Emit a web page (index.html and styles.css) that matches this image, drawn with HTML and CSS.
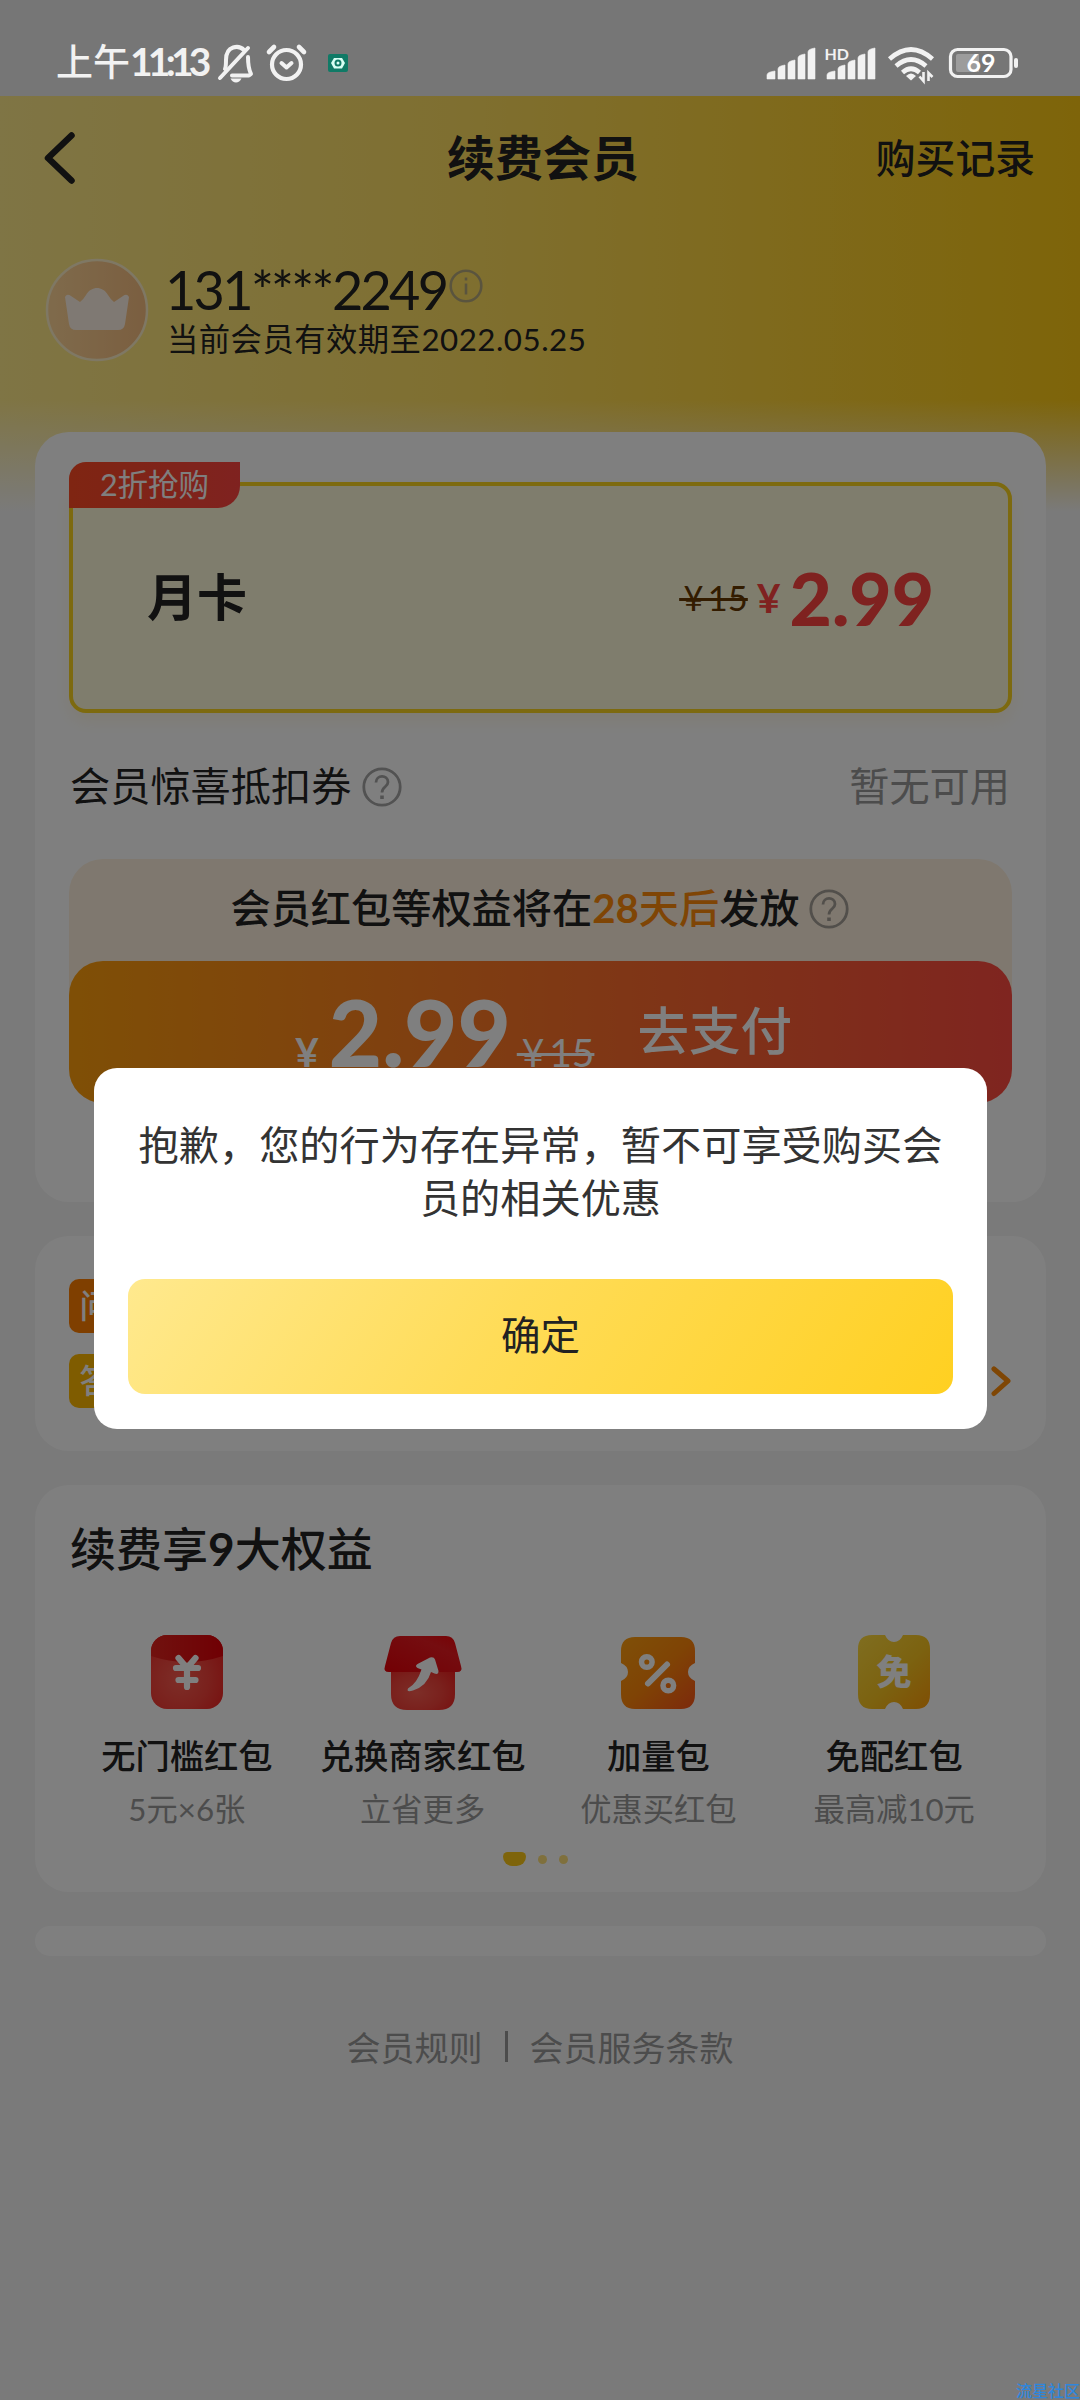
FILE: index.html
```html
<!DOCTYPE html>
<html lang="zh-CN">
<head>
<meta charset="utf-8">
<title>续费会员</title>
<link rel="stylesheet" href="styles.css">
</head>
<body>
<div class="phone">
  <div class="page">
    <div class="hero">
      <header class="nav">
        <svg class="back" viewBox="0 0 36 56" width="36" height="56"><path d="M29.5 5.5 6 28l23.500 22.500" fill="none" stroke="#222" stroke-width="6.500" stroke-linecap="round" stroke-linejoin="round"/></svg>
        <h1 class="nav-title">续费会员</h1>
        <span class="nav-link">购买记录</span>
      </header>
      <section class="user">
        <svg class="avatar" viewBox="0 0 104 104" width="104" height="104">
          <defs><linearGradient id="av" x1="0" x2="1"><stop offset="0" stop-color="#ffd698"/><stop offset="1" stop-color="#f6bd80"/></linearGradient></defs>
          <circle cx="52" cy="52" r="50" fill="url(#av)" stroke="#fff0c8" stroke-width="2.500"/>
          <path d="M20 39q2-4 6-1l9 6q3-2 6-7c3-5 7-7 11-7s8 2 11 7q3 5 6 7l9-6q4-3 6 1l-4 27q-1 6-7 6H31q-6 0-7-6z" fill="#fff3e6"/>
        </svg>
        <div class="user-text">
          <div class="phone-row"><span class="phone-no">131<span class="stars">****</span>2249</span>
            <svg class="info" viewBox="0 0 34 34" width="34" height="34" fill="none" stroke="#b5a97c" stroke-width="2.600"><circle cx="17" cy="17" r="15.300"/><path d="M17 14.500v11M17 8.500v3"/></svg>
          </div>
          <div class="expiry">当前会员有效期至2022.05.25</div>
        </div>
      </section>
    </div>

    <main class="cards">
      <section class="card card-plan">
        <div class="plan">
          <span class="tag">2折抢购</span>
          <span class="plan-name">月卡</span>
          <span class="plan-price"><span class="was">&thinsp;¥&thinsp;15</span><span class="yen">¥</span><span class="now">2.99</span></span>
        </div>
        <div class="coupon">
          <span class="coupon-name">会员惊喜抵扣券</span>
          <svg class="help" viewBox="0 0 40 40" width="40" height="40" fill="none" stroke="#a4a4a4" stroke-width="2.800"><circle cx="20" cy="20" r="18.200"/><path d="M14 15.500c0-8 12-8 12-.5 0 5-6 4.500-6 10.500"/><path d="M20 28.500v3.500" stroke-width="3.600"/></svg>
          <span class="coupon-none">暂无可用</span>
        </div>
        <div class="pay-wrap">
          <div class="notice">
            <span>会员红包等权益将在<em class="days"><b>28</b>天后</em>发放</span>
            <svg class="help" viewBox="0 0 40 40" width="40" height="40" fill="none" stroke="#a49e96" stroke-width="2.800"><circle cx="20" cy="20" r="18.200"/><path d="M14 15.500c0-8 12-8 12-.5 0 5-6 4.500-6 10.500"/><path d="M20 28.500v3.500" stroke-width="3.600"/></svg>
          </div>
          <div class="pay">
            <span class="pay-yen">¥</span><span class="pay-now">2.99</span><span class="pay-was">&thinsp;¥&thinsp;15</span><span class="pay-go">去支付</span>
          </div>
        </div>
      </section>

      <section class="card card-faq">
        <div class="faq-row"><span class="badge badge-q">问</span></div>
        <div class="faq-row"><span class="badge badge-a">答</span>
          <svg class="more" viewBox="0 0 22 32" width="22" height="32"><path d="M4 4 18 16 4 28.500" fill="none" stroke="#ff8c08" stroke-width="5" stroke-linecap="round" stroke-linejoin="round"/></svg>
        </div>
      </section>

      <section class="card card-perks">
        <h2 class="perks-title">续费享<b>9</b>大权益</h2>
        <div class="perks">
          <div class="perk">
            <svg class="perk-icon" viewBox="0 0 80 80" width="80" height="80">
              <defs>
                <linearGradient id="r1" x1="0" x2="1"><stop offset="0" stop-color="#e2241e"/><stop offset="1" stop-color="#e00008"/></linearGradient>
                <radialGradient id="r2" cx=".4" cy=".6" r=".8"><stop offset="0" stop-color="#fb5c50"/><stop offset=".5" stop-color="#f4423a"/><stop offset="1" stop-color="#ee1a1a"/></radialGradient>
                <clipPath id="c1"><rect x="4" y="3" width="72" height="74" rx="16"/></clipPath>
              </defs>
              <g clip-path="url(#c1)"><path d="M4 3h72v74H4z" fill="url(#r2)"/><path d="M4 3h72v21Q40 36 4 24z" fill="url(#r1)"/></g>
              <path d="M31.500 26 40 36l8.500-10M29 36h22M31.500 48h17M40 36v19" fill="none" stroke="#fff" stroke-width="6.200" stroke-linecap="round" stroke-linejoin="round"/>
            </svg>
            <div class="perk-name">无门槛红包</div><div class="perk-sub">5元×6张</div>
          </div>
          <div class="perk">
            <svg class="perk-icon" viewBox="0 0 80 80" width="80" height="80">
              <defs><linearGradient id="r3" x1="0" y1="1" x2="1" y2="0"><stop offset="0" stop-color="#e60008"/><stop offset=".7" stop-color="#ea1a20"/><stop offset="1" stop-color="#f2040a"/></linearGradient></defs>
              <path d="M8 34h64v28q0 16-16 16H24Q8 78 8 62z" fill="url(#r2)"/>
              <path d="M17 4h46q7 0 9 7l6 23q2 6-4 6H6q-6 0-4-6l6-23q2-7 9-7z" fill="url(#r3)"/>
              <path d="M25 56.500q9-5 13.500-19l-4-1.500q-3-2 0-4L47 25.500q4-1 5 2L55.500 39q0 4-4 2.500l-3.500-1.500Q44 54 30 58.500q-7 2-5-2z" fill="#fff"/>
            </svg>
            <div class="perk-name">兑换商家红包</div><div class="perk-sub">立省更多</div>
          </div>
          <div class="perk">
            <svg class="perk-icon" viewBox="0 0 80 80" width="80" height="80">
              <defs><linearGradient id="o1" x1="0" y1="0" x2="1" y2="1"><stop offset="0" stop-color="#ffa010"/><stop offset=".5" stop-color="#ff870a"/><stop offset="1" stop-color="#fa5418"/></linearGradient></defs>
              <path d="M17 5h46q14 0 14 14v12q-7 3-7 9t7 9v13q0 15-14 15H17Q3 77 3 62V49q7-3 7-9t-7-9V19Q3 5 17 5z" fill="url(#o1)"/>
              <g fill="none" stroke="#fff" stroke-width="5.500"><circle cx="28.800" cy="30" r="5.300"/><circle cx="50.300" cy="53.500" r="5.300"/><path d="M49 32.500 30 51.500" stroke-linecap="round" stroke-width="6"/></g>
            </svg>
            <div class="perk-name">加量包</div><div class="perk-sub">优惠买红包</div>
          </div>
          <div class="perk">
            <svg class="perk-icon" viewBox="0 0 80 80" width="80" height="80">
              <defs><linearGradient id="y1" x1="0" y1="0" x2="1" y2="1"><stop offset="0" stop-color="#ffdc40"/><stop offset=".55" stop-color="#f8c420"/><stop offset="1" stop-color="#ff9d08"/></linearGradient></defs>
              <path d="M18 3h13q3 7 9 7t9-7h13q14 0 14 14v45q0 15-14 15H49q-3-7-9-7t-9 7H18Q4 77 4 62V17Q4 3 18 3z" fill="url(#y1)"/>
              <text class="icon-char" x="40" y="52.500" text-anchor="middle">免</text>
            </svg>
            <div class="perk-name">免配红包</div><div class="perk-sub">最高减10元</div>
          </div>
        </div>
        <div class="dots"><i class="dot dot-on"></i><i class="dot"></i><i class="dot"></i></div>
      </section>

      <section class="card card-empty"></section>
    </main>

    <footer class="terms"><span>会员规则</span><i class="bar"></i><span>会员服务条款</span></footer>
  </div>

  <div class="mask">
    <div class="dialog" role="dialog">
      <p class="dialog-text">抱歉，您的行为存在异常，暂不可享受购买会员的相关优惠</p>
      <button class="dialog-btn">确定</button>
    </div>
  </div>

  <div class="status">
    <span class="time">上午<span class="digits">11:13</span></span>
    <svg class="status-left" viewBox="214 40 140 48" width="140" height="48">
      <g fill="none" stroke="#f2f2f2" stroke-width="4" stroke-linecap="round" stroke-linejoin="round">
        <path d="M225 69q1-2 1-9c0-15 13-15 18-10M248 57q0 11 3 17l-2 1.500h-17"/><path d="M220 78 248 48"/>
        <circle cx="286.500" cy="64.500" r="14.500" stroke-width="4.200"/><path d="M281.500 63l5 4.500 5-4.500"/><path d="M269 52l5-5M304 52l-5-5" stroke-width="4.600"/>
      </g>
      <path d="M230.500 78.500h11q-2 4-5.500 4t-5.500-4z" fill="#f2f2f2"/>
      <rect x="328" y="54" width="20" height="18" rx="2" fill="#107a66"/>
      <path d="M334 58h8l3 5-3 5.500h-8l-3-5.500z" fill="#d8fff4"/><circle cx="338" cy="63" r="2.500" fill="#d8fff4" stroke="#107a66" stroke-width="2"/>
    </svg>
    <svg class="status-right" viewBox="760 40 264 48" width="264" height="48" fill="#f2f2f2">
      <g id="bars"><path d="M767 79v-4q0-3 8-4v8zM778 79V69q0-3 7-4v14zM788 79V64q0-3 7-4v19zM798 79V58q0-3 7-4v25zM808 79V52q0-3 7-4v31z" stroke="#f2f2f2" stroke-width=".6" stroke-linejoin="round"/></g>
      <use href="#bars" x="60"/>
      <text class="hd" x="824.500" y="59.500">HD</text>
      <g fill="none" stroke="#f2f2f2" stroke-width="4.600"><path d="M889.500 59q21.500-19 43 0M896 66q15-13 30 0M902.500 72.500q8.500-7.500 17 0"/></g>
      <path d="M906 76q5-5 10 0l-5 4.500z"/>
      <path d="M923.500 72v9l-4-4.500M928.500 81v-8l4 4" fill="none" stroke="#f2f2f2" stroke-width="2.600"/>
      <rect x="950.500" y="49.500" width="60.500" height="27" rx="7" fill="none" stroke="#f2f2f2" stroke-width="3.200"/>
      <path d="M958 54h21v18h-21q-2 0-2-2V56q0-2 2-2z" fill="#9c9c9c"/>
      <rect x="1014" y="58" width="4" height="10" rx="2"/>
      <text class="level" x="981" y="72" text-anchor="middle">69</text>
    </svg>
  </div>
  <span class="watermark">流星社区</span>
</div>
</body>
</html>
```
FILE: styles.css
```css
* { box-sizing: border-box; }
body { margin: 0; }
.phone {
  position: relative;
  width: 1080px;
  height: 2400px;
  overflow: hidden;
  font-family: "Lato", "Noto Sans CJK SC", sans-serif;
  color: #222;
}
.page { height: 2400px; padding-top: 96px; background: #f5f5f5; }
h1, h2, p { margin: 0; font-weight: 500; }

.hero {
  height: 416px;
  background:
    linear-gradient(to bottom, rgba(245,245,245,0) 73%, #f5f5f5 100%),
    linear-gradient(to right, #ffea8a 0%, #ffdf62 42%, #ffda50 55%, #fdcd20 90%, #fcc914 100%);
}
.nav { display: flex; align-items: center; height: 124px; padding: 0 45px 0 42px; }
.back { flex: none; }
.nav-title { flex: 1; padding-left: 133px; text-align: center; font-size: 48px; line-height: 60px; font-weight: 700; }
.nav-link { width: 160px; text-align: right; font-size: 39.8px; line-height: 50px; font-weight: 500; }

.user { display: flex; gap: 18px; padding: 38px 0 0 45px; }
.phone-row { display: flex; height: 63px; align-items: center; }
.phone-no { margin-left: -2px; font-size: 54px; line-height: 64px; letter-spacing: -2.7px; }
.info { margin-top: -8px; margin-left: 3px; }
.expiry { font-size: 31.3px; line-height: 36px; letter-spacing: .5px; }

.cards { display: flex; flex-direction: column; gap: 34px; margin-top: -80px; padding: 0 34px 0 35px; }
.card { background: #fff; border-radius: 34px; padding: 0 34px; }
.card-plan { height: 770px; padding-top: 50px; }
.plan {
  position: relative;
  display: flex;
  justify-content: space-between;
  align-items: center;
  height: 231px;
  padding: 0 74px 0 74px;
  border: 4px solid #fbd41f;
  border-radius: 17px;
  background: #fffbdb;
  box-shadow: 0 8px 16px rgba(255, 214, 120, .18);
}
.tag {
  position: absolute;
  left: -4px;
  top: -24px;
  width: 171px;
  height: 46px;
  border-radius: 17px 0 22px 0;
  background: linear-gradient(to right, #ff4a24, #ff4540);
  color: #fff;
  text-align: center;
  font-size: 30.5px;
  line-height: 45px;
}
.plan-name { padding-bottom: 7px; font-size: 50px; font-weight: 700; }
.plan-price { display: flex; align-items: center; height: 80px; }
.was { font-size: 34.5px; color: #663800; text-decoration: line-through; text-decoration-thickness: 3px; }
.yen { margin-left: 9px; font-size: 41px; font-weight: 700; color: #ff4440; }
.now { margin-left: 9px; font-size: 73px; font-weight: 900; color: #ff4440; }

.coupon { display: flex; align-items: center; height: 146px; font-size: 40.2px; line-height: 50px; padding: 0 2px 0 1px; }
.coupon .help { margin-left: 11px; margin-top: 2px; }
.coupon-none { margin-left: auto; color: #999; }

.pay-wrap { border-radius: 34px; background: #fff1de; }
.notice { display: flex; justify-content: center; align-items: center; gap: 9px; height: 102px; padding: 0 2px 5px 0; font-size: 40.2px; line-height: 50px; font-weight: 500; }
.notice .help { margin-top: 3px; }
.days { font-style: normal; color: #ff8a0a; }
.pay {
  display: flex;
  align-items: baseline;
  height: 142px;
  padding-left: 226px;
  border-radius: 34px;
  background: linear-gradient(to right, #ff9f0c 0%, #ff7428 50%, #ff4a40 100%);
  color: #fff;
  line-height: 142px;
}
.pay-yen { font-size: 41px; font-weight: 700; }
.pay-now { margin-left: 10px; font-size: 92px; font-weight: 900; }
.pay-was { margin-left: 6px; font-size: 39px; text-decoration: line-through; text-decoration-thickness: 3px; }
.pay-go { align-self: flex-start; margin-left: 43px; font-size: 51.5px; line-height: 138px; font-weight: 500; }

.card-faq { display: flex; flex-direction: column; gap: 21px; height: 215px; padding-top: 43px; }
.faq-row { display: flex; align-items: center; justify-content: space-between; height: 54px; }
.badge { width: 54px; height: 54px; border-radius: 10px; color: #fff; text-align: center; font-size: 33px; line-height: 52px; font-weight: 500; }
.badge-q { background: #ff7e00; }
.badge-a { background: #ffb800; }

.card-perks { height: 407px; padding-top: 35px; }
.perks-title { padding-left: 1px; font-size: 46px; line-height: 58px; font-weight: 500; }
.perks { display: grid; grid-template-columns: repeat(4, 1fr); margin-top: 54px; }
.perk { display: flex; flex-direction: column; align-items: center; white-space: nowrap; }
.icon-char { font-size: 35px; font-weight: 900; fill: #fff; }
.perk-name { margin-top: 22px; font-size: 34.300px; line-height: 44px; font-weight: 500; }
.perk-sub { margin-top: 11px; font-size: 31.300px; line-height: 40px; color: #999; }
.dots { display: flex; justify-content: center; align-items: center; gap: 12px; height: 20px; margin-top: 20px; padding-right: 11px; }
.dot { width: 9px; height: 9px; border-radius: 50%; background: #ffe07a; }
.dot-on { width: 23px; height: 14px; border-radius: 6px 6px 12px 12px; background: #fcc916; }
.card-empty { height: 30px; border-radius: 17px; }

.terms { display: flex; justify-content: center; align-items: center; gap: 22px; margin-top: 68px; height: 44px; font-size: 34px; color: #999; }
.bar { width: 3px; height: 31px; background: #999; }

.mask { position: absolute; inset: 0; padding: 1068px 93px 0 94px; background: rgba(0, 0, 0, .502); }
.dialog { height: 361px; padding: 50px 34px 0; border-radius: 23px; background: #fff; }
.dialog-text { height: 161px; margin: 0 8px; text-align: center; font-size: 40.200px; line-height: 53px; font-weight: 400; color: #333; }
.dialog-btn {
  display: block;
  width: 825px;
  height: 115px;
  padding: 0 0 8px;
  border: 0;
  border-radius: 17px;
  background: linear-gradient(125deg, #ffe98e 0%, #ffdc58 45%, #ffd021 100%);
  font: 400 39.500px "Noto Sans CJK SC", sans-serif;
  color: #222;
}

.status { position: absolute; top: 0; left: 0; display: flex; align-items: flex-start; width: 1080px; height: 96px; padding: 40px 56px 0 56px; background: #767676; color: #f2f2f2; }
.time { width: 154px; margin-top: -3px; font-size: 37px; line-height: 48px; font-weight: 500; white-space: nowrap; }
.digits { font-size: 39px; font-weight: 700; letter-spacing: -4.8px; }
.status-left { margin-left: 4px; }
.status-right { margin-left: auto; }
.hd { font: 700 16px "Lato", sans-serif; }
.level { font: 700 25px "Lato", sans-serif; fill: #fff; }

.watermark { position: absolute; left: 1016px; top: 2382px; width: 64px; font-size: 16px; line-height: 18px; font-weight: 500; color: #2f86dc; white-space: nowrap; }
```
